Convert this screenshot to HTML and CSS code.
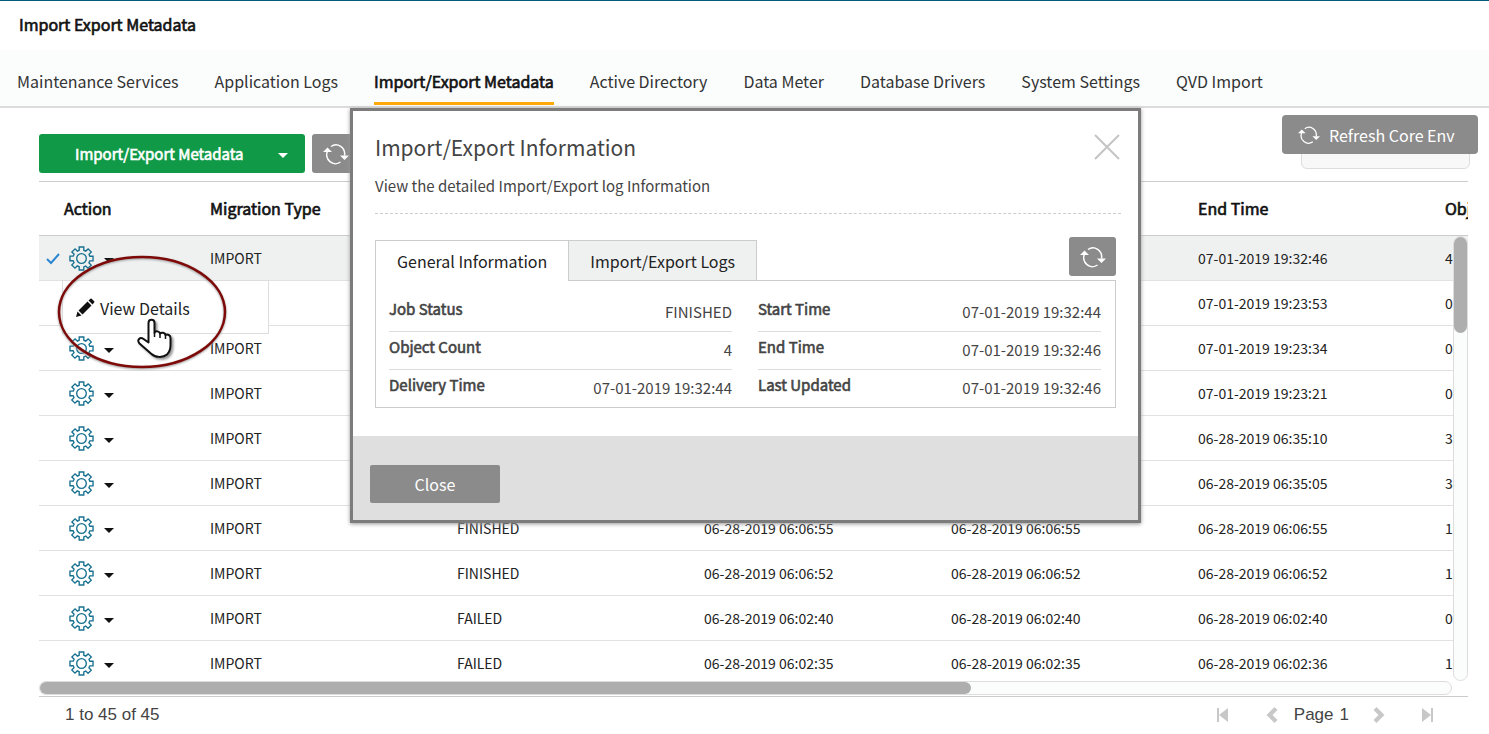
FILE: index.html
```html
<!DOCTYPE html>
<html lang="en">
<head>
  <meta charset="UTF-8">
  <meta name="viewport" content="width=device-width, initial-scale=1.0">
  <title>Import Export Metadata</title>
  <link rel="stylesheet" href="styles.css">
</head>
<body>
  <svg class="sprite" aria-hidden="true">
    <symbol id="gear" viewBox="0 0 26 26">
      <path d="M10.6 4.400V1h4.800v3.400l2 .9 2.500-2.300 3.300 3.300-2.400 2.400.9 2H25v4.800h-3.400l-.9 2 2.400 2.400-3.300 3.300-2.400-2.300-2 .9V25h-4.800v-3.400l-2-.9-2.400 2.300-3.300-3.300 2.300-2.400-.9-2H1v-4.800h3.400l.9-2L3 6.300 6.300 3l2.400 2.300z"/>
      <circle cx="13" cy="13" r="5"/>
    </symbol>
    <symbol id="refresh" viewBox="0 0 26 22">
      <path class="arc" d="M4.500 8a8.700 9 0 0 0 13 11M8 3.500a8.700 9 0 0 1 13.500 9"/>
      <path class="tip" d="M0 9L4.500 4.500 9 9zM17 12.500h9L21.500 17z"/>
    </symbol>
  </svg>

  <header class="page-header">
    <h1>Import Export Metadata</h1>
  </header>

  <nav class="tabs">
    <a href="#">Maintenance Services</a>
    <a href="#">Application Logs</a>
    <a href="#" class="active">Import/Export Metadata</a>
    <a href="#">Active Directory</a>
    <a href="#">Data Meter</a>
    <a href="#">Database Drivers</a>
    <a href="#">System Settings</a>
    <a href="#">QVD Import</a>
  </nav>

  <main class="content">
    <div class="toolbar">
      <button type="button" class="btn-green">Import/Export Metadata <span class="caret"></span></button>
      <button type="button" class="btn-icon" aria-label="Refresh"><svg class="refresh"><use href="#refresh"/></svg></button>
      <input type="search" class="search" aria-label="Search">
    </div>

    <div class="grid">
      <div class="grid-view">
        <table>
          <colgroup>
            <col class="col-action">
            <col class="col-data" span="6">
          </colgroup>
          <thead>
            <tr>
              <th class="action">Action</th>
              <th>Migration Type</th>
              <th></th>
              <th></th>
              <th></th>
              <th>End Time</th>
              <th>Object Count</th>
            </tr>
          </thead>
          <tbody id="rows"></tbody>
        </table>
      </div>
      <div class="vscroll"><div class="vthumb"></div></div>
      <div class="hscroll"><div class="hthumb"></div></div>

      <div class="row-menu">
        <button type="button">
          <svg class="pencil" viewBox="0 0 20 20"><path d="M1 19l1.500-5.500 4 4zM3.500 12.500L12.500 3.500l4 4-9 9zM13.500 2.500L15.500.8q.6-.5 1.200 0l2.500 2.500q.5.600 0 1.200l-1.700 2z"/></svg>
          View Details
        </button>
      </div>
      <svg class="callout" viewBox="0 0 180 124" aria-hidden="true">
        <ellipse cx="89" cy="62" rx="83" ry="55"/>
        <path class="hand" d="M95.500 86.500V73c0-4.500 6-4.500 6 0v10c1-2.500 5-2 5.500.5 1.500-1.500 5-1 5.500 1.500 2-1 5 0 5 3v7c0 4-1 7-3.500 9.500-4 3.500-12 3-15.500-.500L86.500 93.500c-3-3.500.500-7 4-4.500l5 3.500z"/>
        <path class="hand-line" d="M101.500 83v4M107 84v4M112.500 85v4"/>
      </svg>
    </div>

    <footer class="pager">
      <span>1 to 45 of 45</span>
      <div class="pages">
        <button type="button" aria-label="First page"><svg viewBox="0 0 16 16"><path d="M3 1h2v14H3zM14 1v14L5 8z"/></svg></button>
        <button type="button" class="prev" aria-label="Previous page"><svg viewBox="0 0 16 16"><path d="M10.500 0L13.500 3 8.500 8l5 5-3 3-8-8z"/></svg></button>
        <span class="page-label"><span>Page</span><span>1</span></span>
        <button type="button" class="next" aria-label="Next page"><svg viewBox="0 0 16 16"><path d="M5.500 0L2.500 3l5 5-5 5 3 3 8-8z"/></svg></button>
        <button type="button" aria-label="Last page"><svg viewBox="0 0 16 16"><path d="M11 1h2v14h-2zM2 1v14l9-7z"/></svg></button>
      </div>
    </footer>
  </main>

  <button type="button" class="btn-env"><svg class="refresh"><use href="#refresh"/></svg>Refresh Core Env</button>

  <div class="overlay">
    <section class="dialog" role="dialog" aria-labelledby="dialogTitle">
      <div class="dialog-body">
        <div class="dialog-head">
          <h2 id="dialogTitle">Import/Export Information</h2>
          <button type="button" class="close-x" aria-label="Close"><svg viewBox="0 0 26 26"><path d="M1 1l24 24M25 1L1 25"/></svg></button>
        </div>
        <p>View the detailed Import/Export log Information</p>
        <div class="dialog-tabs">
          <button type="button" class="selected">General Information</button>
          <button type="button">Import/Export Logs</button>
          <button type="button" class="btn-icon" aria-label="Refresh"><svg class="refresh"><use href="#refresh"/></svg></button>
        </div>
        <div class="details">
          <dl>
            <div><dt>Job Status</dt><dd>FINISHED</dd></div>
            <div><dt>Object Count</dt><dd>4</dd></div>
            <div><dt>Delivery Time</dt><dd>07-01-2019 19:32:44</dd></div>
          </dl>
          <dl>
            <div><dt>Start Time</dt><dd>07-01-2019 19:32:44</dd></div>
            <div><dt>End Time</dt><dd>07-01-2019 19:32:46</dd></div>
            <div><dt>Last Updated</dt><dd>07-01-2019 19:32:46</dd></div>
          </dl>
        </div>
      </div>
      <div class="dialog-foot">
        <button type="button">Close</button>
      </div>
    </section>
  </div>

  <script src="script.js"></script>
</body>
</html>
```

FILE: styles.css
```css
* {
  box-sizing: border-box;
}
body {
  margin: 0;
  font-family: "Noto Sans CJK SC", "Source Sans Pro", sans-serif;
  font-size: 16px;
  line-height: 24px;
  color: #222;
  background: #fff;
  border-top: 1px solid #005a78;
  overflow: hidden;
}
button {
  font: inherit;
  color: inherit;
  border: 0;
  padding: 0;
  background: none;
  cursor: pointer;
}
.sprite {
  display: none;
}
.page-header {
  height: 49px;
  padding: 11px 19px;
}
.page-header h1 {
  margin: 0;
  font-size: 16px;
  line-height: 24px;
  color: #111;
}

/* emphasis is a thickened regular cut */
.page-header h1,
.tabs .active,
.btn-green,
th,
dt {
  font-weight: normal;
  -webkit-text-stroke: 0.04em currentColor;
}

/* top navigation */
.tabs {
  display: flex;
  gap: 36px;
  height: 58px;
  padding: 15px 17px 0;
  background: #fbfdfd;
  border-bottom: 2px solid #dcdcdc;
}
.tabs a {
  height: 40px;
  line-height: 32px;
  color: #333;
  text-decoration: none;
  white-space: nowrap;
}
.tabs .active {
  color: #111;
  border-bottom: 3px solid #ffa90a;
}

/* toolbar */
.content {
  padding: 26px 21px 0 39px;
}
.toolbar {
  display: flex;
  gap: 7px;
  height: 47px;
}
.btn-green {
  display: flex;
  align-items: center;
  gap: 34px;
  width: 266px;
  height: 39px;
  padding-left: 36px;
  border-radius: 3px;
  background: #109947;
  color: #fff;
  font-size: 15px;
}
.caret {
  border: 5px solid transparent;
  border-top-color: currentColor;
  border-bottom: 0;
}
.btn-green .caret {
  margin-top: 4px;
}
.btn-icon {
  width: 47px;
  height: 39px;
  border-radius: 3px;
  background: #8b8b8b;
}
.refresh {
  width: 26px;
  height: 22px;
  vertical-align: middle;
}
.btn-icon .refresh {
  display: block;
  margin: 0 auto;
}
.arc {
  fill: none;
  stroke: #fff;
  stroke-width: 1.5;
}
.tip {
  fill: #fff;
}
.search {
  width: 169px;
  height: 35px;
  margin-left: auto;
  margin-right: -2px;
  border: 1px solid #ddd;
  border-radius: 6px;
  background: #f8f8f8;
}
.btn-env {
  position: absolute;
  top: 115px;
  right: 11px;
  display: flex;
  align-items: center;
  gap: 9px;
  width: 196px;
  height: 39px;
  padding-left: 16px;
  border-radius: 4px;
  background: #8b8b8b;
  color: #fff;
}
.btn-env .refresh {
  width: 22px;
  height: 20px;
}

/* job grid */
.grid {
  position: relative;
  height: 516px;
  border-top: 1px solid #ccc;
  border-bottom: 1px solid #ccc;
}
.grid-view {
  height: 499px;
  overflow: hidden;
}
table {
  width: 1638px;
  table-layout: fixed;
  border-collapse: collapse;
}
.col-action {
  width: 156px;
}
.col-data {
  width: 247px;
}
th,
td {
  padding: 0 15px;
  text-align: left;
  white-space: nowrap;
}
th {
  height: 53px;
  color: #111;
  border-bottom: 1px solid #ccc;
}
th.action {
  padding-left: 25px;
}
td {
  height: 45px;
  font-size: 14px;
  border-bottom: 1px solid #e2e2e2;
}
td.tools {
  padding: 2px 0 0 6px;
}
.selected-row td {
  background: #eff1f1;
}
.tools-inner {
  display: flex;
  align-items: center;
}
.check {
  width: 16px;
  height: 16px;
  margin-right: 8px;
  fill: none;
  stroke: #2b86d1;
  stroke-width: 2;
}
.gear-btn {
  display: flex;
  align-items: center;
  gap: 10px;
}
.gear {
  width: 25px;
  height: 25px;
  fill: none;
  stroke: #17708f;
  stroke-width: 1.4;
}
.gear-btn .caret {
  margin-top: 4px;
  color: #111;
}
.vscroll {
  position: absolute;
  top: 54px;
  right: 0;
  width: 15px;
  height: 445px;
  border: 1px solid #ddd;
  border-radius: 8px;
  background: #fbfdfd;
}
.vthumb {
  height: 96px;
  border-radius: 7px;
  background: #aeaeae;
}
.hscroll {
  height: 14px;
  margin-right: 16px;
  border: 1px solid #ddd;
  border-radius: 7px;
  background: #fbfdfd;
}
.hthumb {
  width: 66%;
  height: 12px;
  border-radius: 6px;
  background: #aeaeae;
}
.row-menu {
  position: absolute;
  top: 98px;
  left: 23px;
  width: 207px;
  height: 54px;
  padding: 15px 12px;
  background: #fff;
  border: 1px solid #ddd;
}
.row-menu button {
  display: flex;
  align-items: center;
  gap: 5px;
}
.pencil {
  width: 20px;
  height: 20px;
  fill: #111;
}
.callout {
  position: absolute;
  top: 68px;
  left: 14px;
  width: 180px;
  height: 124px;
  pointer-events: none;
}
.callout ellipse {
  fill: none;
  stroke: #7d0a08;
  stroke-width: 2.5;
  filter: drop-shadow(0 1px 1px #999);
}
.hand {
  fill: #fff;
  stroke: #111;
  stroke-width: 2;
  stroke-linejoin: round;
  filter: drop-shadow(2px 2px 1px #999);
}
.hand-line {
  stroke: #111;
  stroke-width: 1.5;
}

/* pager */
.pager {
  display: flex;
  justify-content: space-between;
  height: 36px;
  padding: 0 32px 0 26px;
  font-family: "Liberation Sans", Arial, sans-serif;
  font-size: 17px;
  line-height: 36px;
  color: #444;
}
.pages {
  display: flex;
  align-items: center;
}
.pages svg {
  display: block;
  width: 16px;
  height: 16px;
  fill: #c8c8c8;
}
.prev {
  margin-left: 34px;
}
.page-label {
  display: flex;
  gap: 6px;
  margin: 0 22px 0 14px;
}
.next {
  margin-right: 33px;
}

/* dialog */
.overlay {
  position: absolute;
  top: 108px;
  left: 0;
  right: 0;
  display: flex;
  justify-content: center;
  pointer-events: none;
}
.dialog {
  width: 791px;
  margin-left: 2px;
  border: 3px solid #7c7c7c;
  background: #fff;
  box-shadow: 0 1px 4px #999;
  color: #444;
  pointer-events: auto;
}
.dialog-body {
  padding: 20px 22px 28px;
}
.dialog-head {
  display: flex;
  justify-content: space-between;
  margin-right: -4px;
}
.dialog h2 {
  margin: 0;
  font-size: 21px;
  font-weight: normal;
  line-height: 32px;
}
.close-x svg {
  display: block;
  width: 26px;
  height: 26px;
  fill: none;
  stroke: #c4c4c4;
  stroke-width: 2;
}
.dialog p {
  margin: 0 -5px 23px 0;
  padding: 11px 0 15px;
  font-size: 15px;
  border-bottom: 1px dashed #ccc;
}
.dialog-tabs {
  display: flex;
  align-items: flex-end;
}
.dialog-tabs button {
  height: 40px;
  padding: 0 21px;
  background: #eff1f1;
  color: #222;
  border: 1px solid #ccc;
  border-bottom: 0;
}
.dialog-tabs .selected {
  height: 41px;
  margin-bottom: -1px;
  background: #fff;
  border-right: 0;
}
.dialog-tabs .btn-icon {
  height: 39px;
  margin: 0 0 4px auto;
  padding: 0;
  border: 0;
  background: #8b8b8b;
}
.details {
  display: grid;
  grid-template-columns: 1fr 1fr;
  gap: 26px;
  padding: 13px 14px 0 13px;
  border: 1px solid #ccc;
}
.details dl {
  margin: 0;
}
.details dl div {
  display: flex;
  justify-content: space-between;
  height: 38px;
  font-size: 15px;
  border-bottom: 1px solid #ddd;
}
.details dl div:last-child {
  height: 37px;
  border-bottom: 0;
}
dt {
  padding-top: 3px;
}
dd {
  margin: 0;
  padding-top: 6px;
}
.dialog-foot {
  height: 84px;
  padding: 29px 17px;
  background: #dfdfdf;
}
.dialog-foot button {
  width: 130px;
  height: 38px;
  border-radius: 2px;
  background: #8b8b8b;
  color: #fff;
}
```

FILE: script.js
```js
// type, status, start, delivery, end, objects
const jobs = [
  ['IMPORT', '', '', '', '07-01-2019 19:32:46', '4'],
  ['', '', '', '', '07-01-2019 19:23:53', '0'],
  ['IMPORT', '', '', '', '07-01-2019 19:23:34', '0'],
  ['IMPORT', '', '', '', '07-01-2019 19:23:21', '0'],
  ['IMPORT', '', '', '', '06-28-2019 06:35:10', '3'],
  ['IMPORT', '', '', '', '06-28-2019 06:35:05', '3'],
  ['IMPORT', 'FINISHED', '06-28-2019 06:06:55', '06-28-2019 06:06:55', '06-28-2019 06:06:55', '1'],
  ['IMPORT', 'FINISHED', '06-28-2019 06:06:52', '06-28-2019 06:06:52', '06-28-2019 06:06:52', '1'],
  ['IMPORT', 'FAILED', '06-28-2019 06:02:40', '06-28-2019 06:02:40', '06-28-2019 06:02:40', '0'],
  ['IMPORT', 'FAILED', '06-28-2019 06:02:35', '06-28-2019 06:02:35', '06-28-2019 06:02:36', '1']
];

document.getElementById('rows').innerHTML = jobs.map((job, i) => `
  <tr class="${i === 0 ? 'selected-row' : ''}">
    <td class="tools"><div class="tools-inner">
      <svg class="check" viewBox="0 0 16 16">${i === 0 ? '<path d="M2 8l4 4 8-9"/>' : ''}</svg>
      <button type="button" class="gear-btn" aria-label="Actions"><svg class="gear"><use href="#gear"/></svg><span class="caret"></span></button>
    </div></td>
    ${job.map(value => `<td>${value}</td>`).join('')}
  </tr>`).join('');
```
